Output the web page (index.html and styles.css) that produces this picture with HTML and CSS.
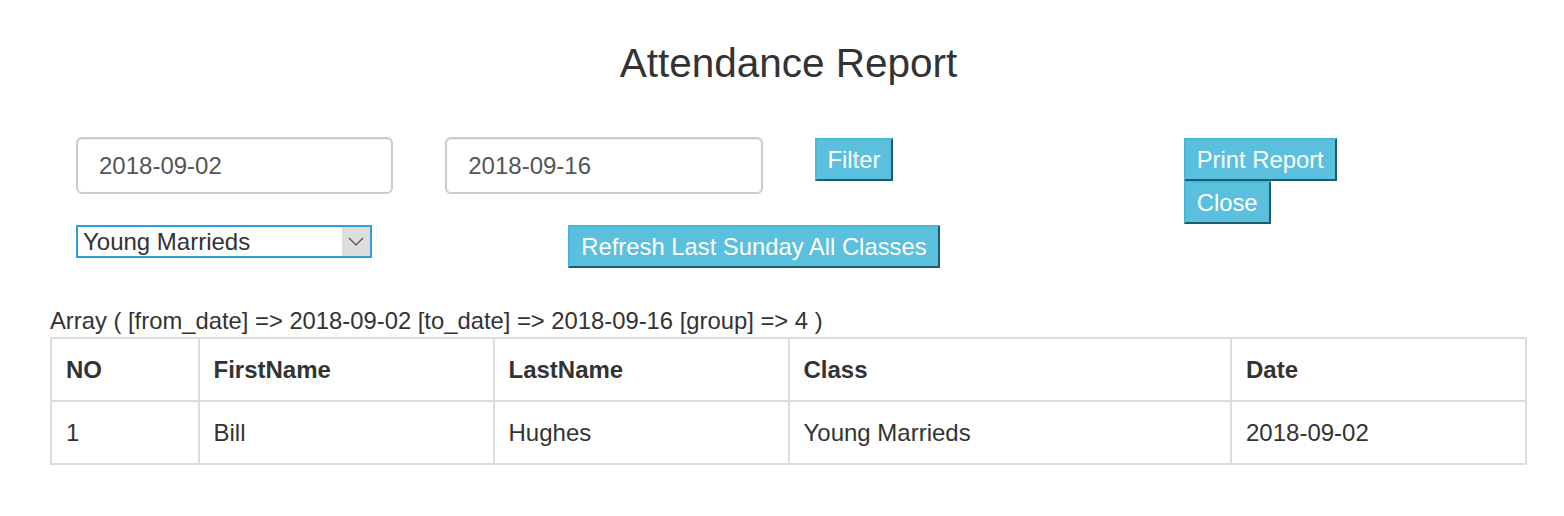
FILE: index.html
```html
<!DOCTYPE html>
<html lang="en">
<head>
    <meta charset="UTF-8">
    <meta name="viewport" content="width=device-width, initial-scale=1.0">
    <title>Attendance Report</title>
    <link rel="stylesheet" href="styles.css">
</head>
<body>

    <div class="container">
        <h3 class="title">Attendance Report</h3>

        <form id="formReport">
            <div class="row">
                <div class="col-3">
                    <input type="text" name="from_date" class="form-control" value="2018-09-02">
                </div>
                <div class="col-3">
                    <input type="text" name="to_date" class="form-control" value="2018-09-16">
                </div>
                <div class="col-3">
                    <button type="submit" class="btn">Filter</button>
                </div>
                <div class="col-3">
                    <button type="button" class="btn btn-block">Print Report</button>
                    <button type="button" class="btn btn-block">Close</button>
                </div>
            </div>

            <div class="row">
                <div class="col-4">
                    <div class="select-wrap">
                        <select name="group" id="group">
                            <option value="1">Adults</option>
                            <option value="4" selected>Young Marrieds</option>
                            <option value="5">Youth</option>
                        </select>
                        <span class="select-arrow">
                            <svg width="16" height="9" viewBox="0 0 16 9">
                                <polyline points="1,1 8,8 15,1" fill="none" stroke="#444" stroke-width="1.2"/>
                            </svg>
                        </span>
                    </div>
                </div>
                <div class="col-4">
                    <button type="button" class="btn">Refresh Last Sunday All Classes</button>
                </div>
            </div>
        </form>

        <p class="debug">Array ( [from_date] =&gt; 2018-09-02 [to_date] =&gt; 2018-09-16 [group] =&gt; 4 )</p>

        <table class="table">
            <colgroup>
                <col class="w10">
                <col class="w20">
                <col class="w20">
                <col class="w30">
                <col class="w20">
            </colgroup>
            <thead>
                <tr>
                    <th>NO</th>
                    <th>FirstName</th>
                    <th>LastName</th>
                    <th>Class</th>
                    <th>Date</th>
                </tr>
            </thead>
            <tbody>
                <tr>
                    <td>1</td>
                    <td>Bill</td>
                    <td>Hughes</td>
                    <td>Young Marrieds</td>
                    <td>2018-09-02</td>
                </tr>
            </tbody>
        </table>
    </div>

</body>
</html>
```

FILE: styles.css
```css
* {
    box-sizing: border-box;
}

body {
    font-family: "Liberation Sans", Arial, sans-serif;
    font-size: 24px;
    line-height: 33px;
    color: #333;
    background: #fff;
    margin: 0;
}

.container {
    width: 1477px;
    margin-left: 50px;
}

.title {
    font-size: 40.5px;
    font-weight: normal;
    line-height: 45px;
    text-align: center;
    margin: 41px 0 51px 0;
}

.row {
    display: flex;
}

.col-3 {
    width: 25%;
    padding: 0 26px;
}

.col-4 {
    width: 33.3333%;
    padding: 0 26px;
}

.form-control {
    display: block;
    width: 100%;
    height: 57px;
    padding: 0 21px;
    font-family: inherit;
    font-size: 24px;
    color: #555;
    border: 2px solid #ccc;
    border-radius: 6px;
    box-shadow: inset 0 1px 1px rgba(0, 0, 0, 0.075);
    outline: none;
}

.btn {
    display: inline-block;
    font-family: inherit;
    font-size: 23.8px;
    line-height: 33px;
    padding: 3px 11px;
    color: #fff;
    background-color: #5bc0de;
    border: 2px solid;
    border-color: #46b8da #1f5d6d #1f5d6d #46b8da;
    cursor: pointer;
    margin-top: 1px;
}

    .btn:hover {
        background-color: #4fb3d1;
    }

.btn-block {
    display: block;
}

    .btn-block + .btn-block {
        margin-top: 0;
    }

.select-wrap {
    position: relative;
    display: inline-block;
    margin-top: 1px;
}

    .select-wrap select {
        display: block;
        width: 296px;
        height: 33px;
        padding: 0 34px 0 5px;
        font-family: inherit;
        font-size: 24px;
        color: #333;
        background: #fff;
        border: 2px solid #2e9fd8;
        border-radius: 0;
        appearance: none;
        -webkit-appearance: none;
        outline: none;
    }

.select-arrow {
    position: absolute;
    top: 2px;
    right: 2px;
    bottom: 2px;
    width: 28px;
    background-color: #ddd;
    display: flex;
    align-items: center;
    justify-content: center;
    pointer-events: none;
}

.debug {
    font-size: 23.8px;
    margin: 36px 0 0 0;
}

.table {
    width: 100%;
    border-collapse: collapse;
    border: 2px solid #ddd;
}

    .table th, .table td {
        text-align: left;
        padding: 14px 14px;
        border: 2px solid #ddd;
    }

    .table th {
        font-weight: bold;
    }

.w10 { width: 10%; }
.w20 { width: 20%; }
.w30 { width: 30%; }
```
